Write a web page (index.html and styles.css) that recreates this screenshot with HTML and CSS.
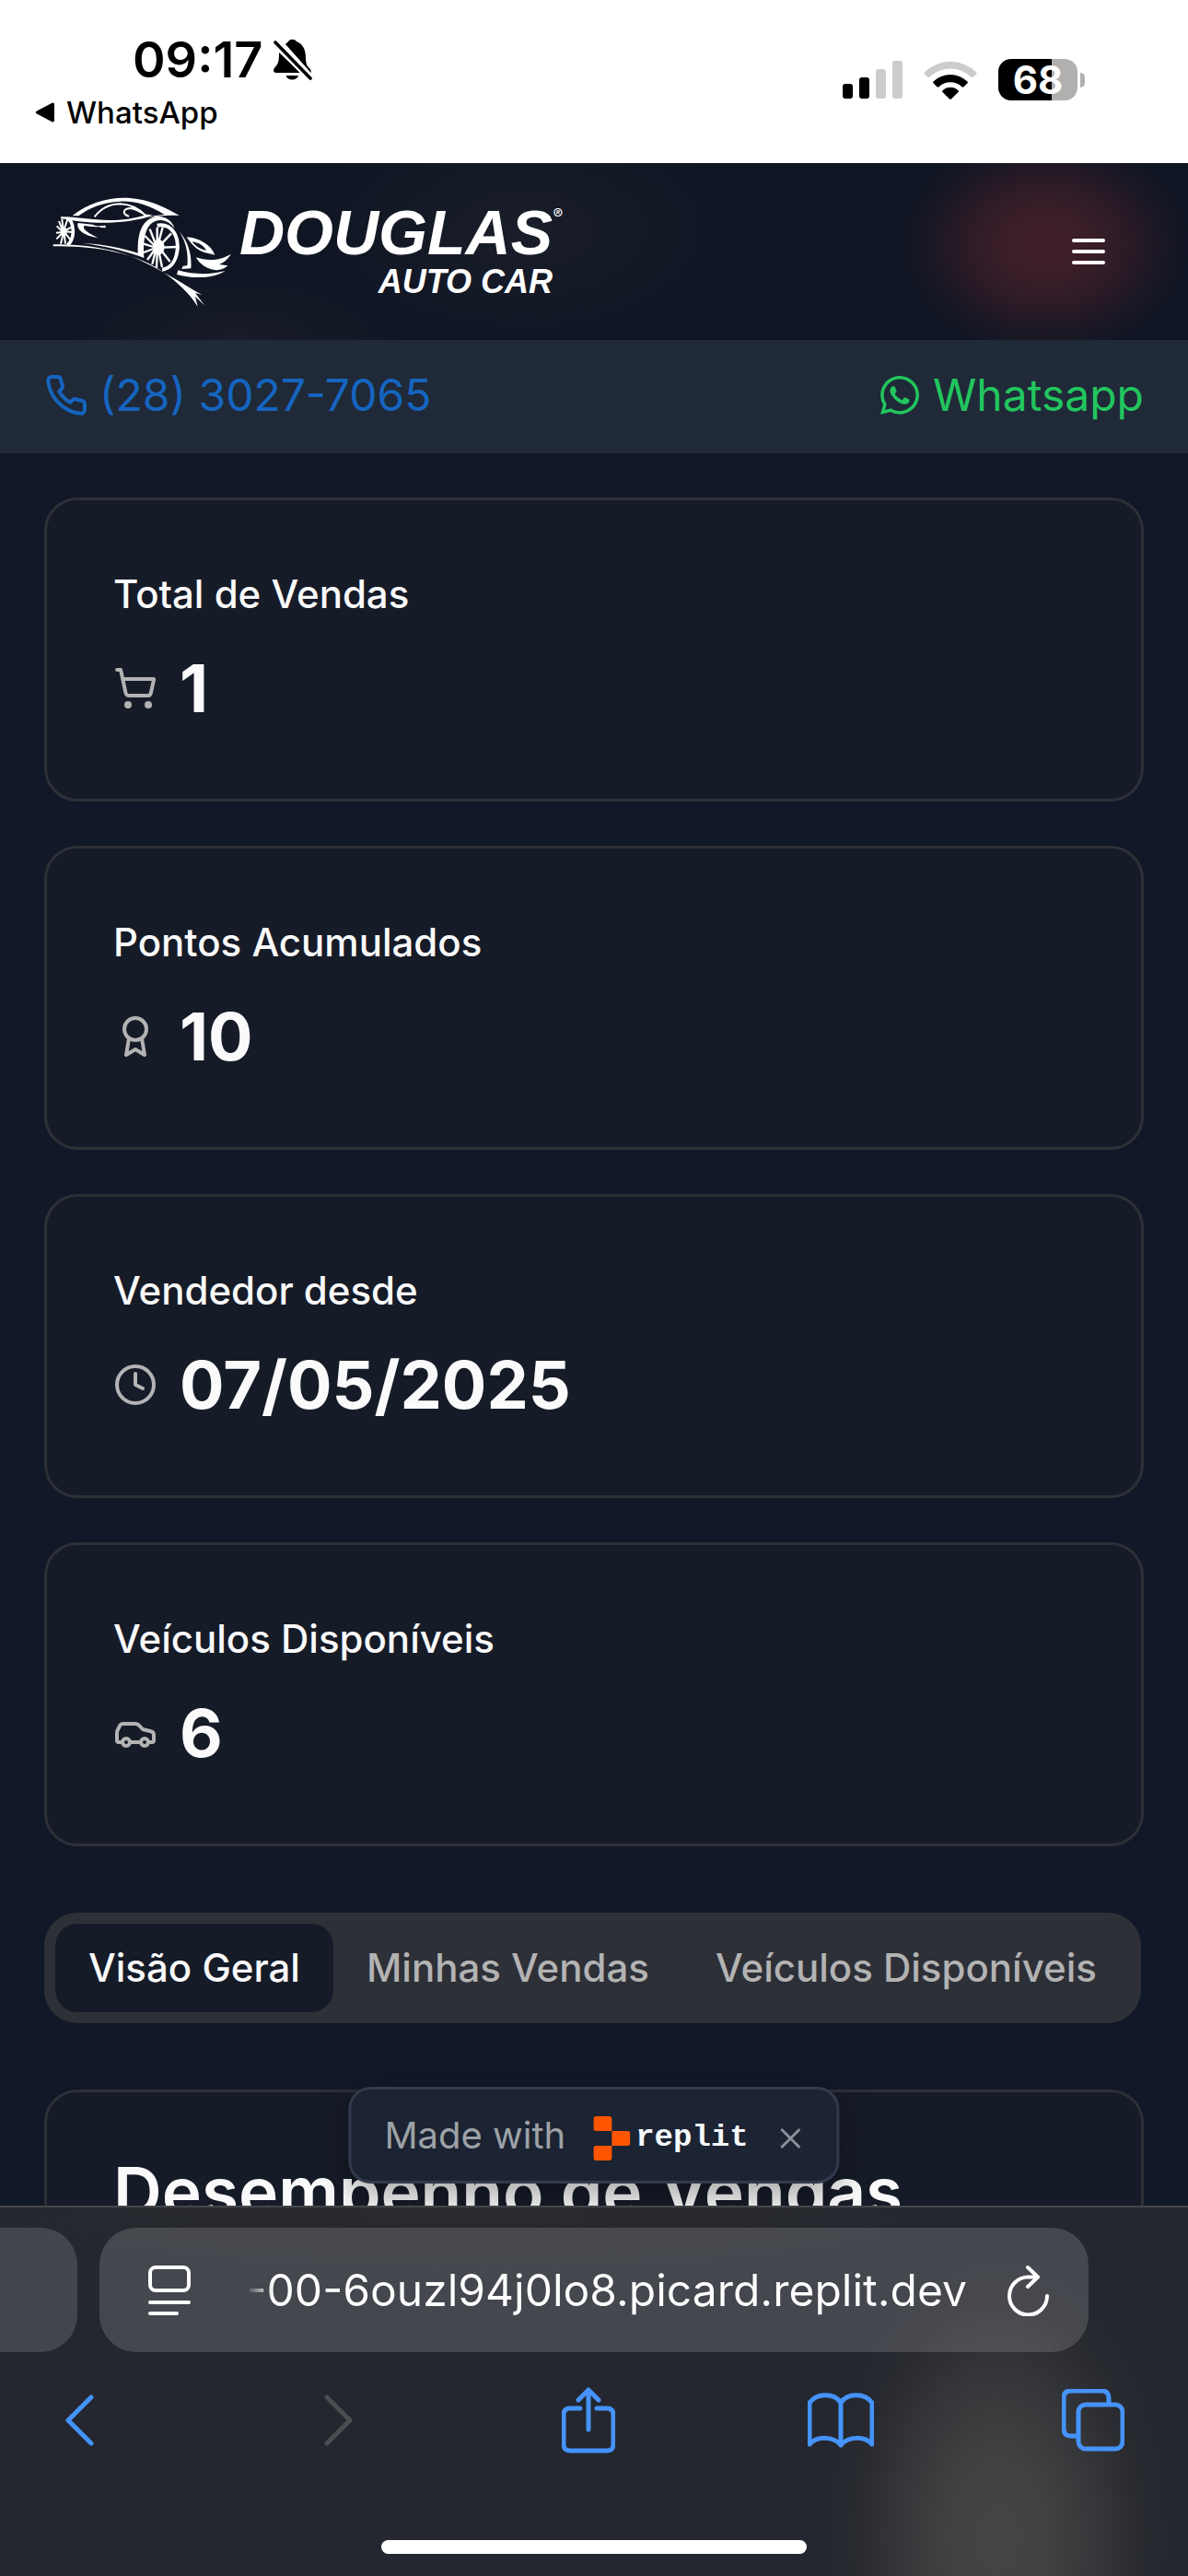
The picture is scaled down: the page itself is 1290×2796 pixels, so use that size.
FILE: index.html
```html
<!DOCTYPE html>
<html lang="pt-BR">
<head>
  <meta charset="utf-8">
  <meta name="viewport" content="width=device-width, initial-scale=1">
  <title>Douglas Auto Car</title>
  <link rel="stylesheet" href="styles.css">
</head>
<body>
  <div class="status">
    <div class="status-left">
      <div class="clock-row">
        <span class="time">09:17</span>
        <svg class="bell" viewBox="0 0 42 46" aria-hidden="true">
          <path d="M12 7C14 4.500 15.500 4 16 3a5 4 0 0 1 9 0c6 2 9.500 8 9.800 15 .3 9 1 11 4.200 14 1.500 1.500 2 3 1.600 5L13 6zM6 15l23.500 22H3c-4 0-3.500-4-1-6.500C5.500 27 6 23 6 15zM13.500 40h13.500a7 6 0 0 1-13.500 0z" fill="currentColor"/>
          <path d="M2 4L40 43" stroke="#fff" stroke-width="8"/>
          <path d="M2 4L40 43" stroke="currentColor" stroke-width="3.600" stroke-linecap="round"/>
        </svg>
      </div>
      <a class="back-app" href="#whatsapp">
        <svg class="back-arrow" viewBox="0 0 22 22" aria-hidden="true"><path d="M2 9.500L18.500.8Q21 0 21 2.500v17q0 2.500-2.500 1.700L2 12.500q-2.500-1.500 0-3z" fill="currentColor"/></svg>
        WhatsApp
      </a>
    </div>
    <div class="status-right">
      <svg class="signal" viewBox="0 0 65 42" aria-hidden="true">
        <rect x="0" y="25" width="11" height="16" rx="3"/>
        <rect x="18" y="18" width="11" height="23" rx="3"/>
        <rect x="36" y="9" width="11" height="32" rx="3" fill="#ccc"/>
        <rect x="54" y="0" width="11" height="41" rx="3" fill="#ccc"/>
      </svg>
      <svg class="wifi" viewBox="0 0 58 42" aria-hidden="true">
        <path d="M.8 12.500a40 40 0 0 1 56.400 0q.8 1 0 1.800l-3.500 3.500q-1 .8-2 0a32.500 32.500 0 0 0-45.400 0q-1 .8-2 0L.8 14.300q-.8-.8 0-1.800z" fill="#ccc"/>
        <path d="M10.500 22.500a26.500 26.500 0 0 1 37 0q.8 1 0 1.800l-4 4q-1 .7-2 0a18 18 0 0 0-25 0q-1 .7-2 0l-4-4q-.8-.8 0-1.800z"/>
        <path d="M20.500 32.200a12.500 12.500 0 0 1 17 0q.8 1 0 1.800l-7.300 7.300q-1.200 1-2.400 0L20.500 34q-.8-.8 0-1.800z"/>
      </svg>
      <div class="battery"><span class="battery-level">68</span><span class="battery-cap"></span></div>
    </div>
  </div>

  <div class="viewport">
    <header class="site-header">
      <a class="logo" href="#inicio" aria-label="Douglas Auto Car">
        <svg class="logo-car" viewBox="-12 0 636 405" aria-hidden="true">
          <g fill="#fff">
            <path d="M80 84C135 40 205 22 268 27c62 5 112 28 160 57-35-2-70 0-104 8 15-7 35-10 56-11C325 47 280 36 235 38 180 41 135 58 100 85z"/>
            <path d="M42 88c70-2 170 30 280-8 8 0 14 2 20 3C250 115 130 112 42 93z"/>
            <path d="M98 108l48 5c12 6 24 5 42 3v8l-16-1-6-3c-16 2-36-2-48-3-5 12 10 22 46 40-40-6-74-25-66-49z"/>
            <path d="M113 174c70 3 130 16 180 32-2-60 10-110 62-120 30 0 50 15 58 40-14-18-32-30-54-26-42 8-50 60-46 122-50-20-120-38-200-48z"/>
            <path d="M17 178c110 0 215 15 300 60 80 38 140 80 185 104l-22-6 30 40-30-28 8 32c-30-48-80-92-140-130C255 200 150 184 17 184z"/>
            <path d="M428 136c26 30 42 70 38 120l-30 2 4-10 14-1c4-40-4-78-26-111z"/>
            <path d="M452 154c40 2 78 24 92 58l-34-8c-26-8-44-28-58-50zm18 15c12 16 26 24 46 29-8-16-24-26-46-29z" fill-rule="evenodd"/>
            <path d="M482 220c36 12 78 12 114-11-10 18-24 28-38 34l28 4c-10 10-26 16-44 14-26-4-46-18-60-41z"/>
            <path d="M424 262c54 16 110 14 154 2-40 26-108 26-158 12z"/>
          </g>
          <g fill="none" stroke="#fff">
            <path d="M152 88c22-28 52-42 84-42 36 2 62 16 82 38M320 84c-18-14-34-20-48-24-28 0-32 20-8 26" stroke-width="6"/>
            <path d="M62 92c24 10 28 66 2 88" stroke-width="11"/>
            <path d="M356 116c48-8 70 36 66 78-4 40-24 62-50 66" stroke-width="12"/>
            <path d="M54 134l26-14M54 136l27 2M54 138l22 28M52 132l12-36M50 132l-4-38M48 134l-12-32M47 136l-18-18M47 138l-20 2M48 140l-20 20M50 142l-8 34M53 142l4 34" stroke-width="6"/>
            <path d="M368 178l34-36M372 188l48-2M368 196l30 38M360 174l14-52M356 172l0-50M350 174l-18-46M346 180l-30-30M344 186l-32-10M344 192l-32 12M346 198l-22 30M350 202l-10 40M356 204l-2 50M362 204l10 48" stroke-width="7"/>
          </g>
          <ellipse cx="53" cy="136" rx="9" ry="13" fill="#fff"/>
          <ellipse cx="361" cy="187" rx="19" ry="25" fill="#fff"/>
        </svg>
        <span class="logo-text">
          <span class="logo-name">DOUGLAS</span>
          <span class="logo-sub">AUTO CAR</span>
        </span>
        <span class="logo-mark">®</span>
      </a>
      <button class="menu-btn" type="button" aria-label="Menu">
        <svg class="icon" viewBox="0 0 24 24" aria-hidden="true"><path d="M4 6h16M4 12h16M4 18h16"/></svg>
      </button>
    </header>

    <div class="contact-bar">
      <a class="contact phone" href="tel:2830277065">
        <svg class="icon" viewBox="0 0 24 24" aria-hidden="true"><path d="M22 16.920v3a2 2 0 0 1-2.180 2 19.790 19.790 0 0 1-8.630-3.070 19.500 19.500 0 0 1-6-6 19.790 19.790 0 0 1-3.070-8.670A2 2 0 0 1 4.110 2h3a2 2 0 0 1 2 1.720 12.840 12.840 0 0 0 .7 2.810 2 2 0 0 1-.45 2.110L8.090 9.910a16 16 0 0 0 6 6l1.270-1.270a2 2 0 0 1 2.110-.45 12.840 12.840 0 0 0 2.810.7A2 2 0 0 1 22 16.920z"/></svg>
        (28) 3027-7065
      </a>
      <a class="contact whats" href="#whatsapp">
        <svg class="icon-fill" viewBox="0 0 448 512" aria-hidden="true"><path d="M380.900 97.100C339 55.100 283.200 32 223.900 32c-122.400 0-222 99.600-222 222 0 39.100 10.200 77.300 29.600 111L0 480l117.700-30.900c32.400 17.700 68.900 27 106.100 27h.1c122.300 0 224.100-99.600 224.100-222 0-59.300-25.200-115-67.100-157zm-157 341.600c-33.200 0-65.700-8.900-94-25.700l-6.700-4-69.800 18.300L72 359.200l-4.400-7c-18.500-29.400-28.200-63.300-28.200-98.200 0-101.700 82.800-184.500 184.600-184.500 49.300 0 95.600 19.200 130.400 54.100 34.800 34.900 56.200 81.200 56.100 130.500 0 101.800-84.900 184.600-186.600 184.600zm101.200-138.200c-5.500-2.800-32.800-16.200-37.900-18-5.100-1.900-8.800-2.800-12.500 2.800-3.700 5.600-14.300 18-17.600 21.800-3.200 3.700-6.500 4.200-12 1.400-32.600-16.300-54-29.100-75.500-66-5.700-9.800 5.700-9.100 16.300-30.300 1.800-3.700.9-6.900-.5-9.700-1.400-2.800-12.500-30.100-17.100-41.200-4.500-10.800-9.100-9.300-12.500-9.500-3.200-.2-6.900-.2-10.600-.2-3.700 0-9.700 1.400-14.800 6.900-5.100 5.600-19.400 19-19.400 46.300 0 27.300 19.900 53.700 22.600 57.400 2.800 3.700 39.100 59.700 94.800 83.800 35.200 15.200 49 16.500 66.600 13.900 10.700-1.600 32.800-13.400 37.400-26.400 4.600-13 4.600-24.100 3.200-26.400-1.300-2.500-5-3.900-10.500-6.600z"/></svg>
        Whatsapp
      </a>
    </div>

    <main class="content">
      <section class="stats">
        <article class="card">
          <h3 class="card-label">Total de Vendas</h3>
          <div class="card-value">
            <svg class="icon" viewBox="0 0 24 24" aria-hidden="true"><circle cx="8" cy="21" r="1"/><circle cx="19" cy="21" r="1"/><path d="M2.050 2.050h2l2.660 12.420a2 2 0 0 0 2 1.580h9.780a2 2 0 0 0 1.950-1.570l1.650-7.430H5.120"/></svg>
            <span>1</span>
          </div>
        </article>
        <article class="card">
          <h3 class="card-label">Pontos Acumulados</h3>
          <div class="card-value">
            <svg class="icon" viewBox="0 0 24 24" aria-hidden="true"><circle cx="12" cy="8" r="6"/><path d="M15.477 12.890L17 22l-5-3-5 3 1.523-9.110"/></svg>
            <span>10</span>
          </div>
        </article>
        <article class="card">
          <h3 class="card-label">Vendedor desde</h3>
          <div class="card-value">
            <svg class="icon" viewBox="0 0 24 24" aria-hidden="true"><circle cx="12" cy="12" r="10"/><path d="M12 6v6l4 2"/></svg>
            <span>07/05/2025</span>
          </div>
        </article>
        <article class="card">
          <h3 class="card-label">Veículos Disponíveis</h3>
          <div class="card-value">
            <svg class="icon" viewBox="0 0 24 24" aria-hidden="true"><path d="M19 17h2c.6 0 1-.4 1-1v-3c0-.9-.7-1.700-1.500-1.900C18.700 10.600 16 10 16 10s-1.300-1.400-2.200-2.300c-.5-.4-1.100-.7-1.800-.7H5c-.6 0-1.100.4-1.400.9l-1.400 2.900A3.700 3.700 0 0 0 2 12v4c0 .6.4 1 1 1h2"/><circle cx="7" cy="17" r="2"/><path d="M9 17h6"/><circle cx="17" cy="17" r="2"/></svg>
            <span>6</span>
          </div>
        </article>
      </section>

      <div class="tabs" role="tablist">
        <button class="tab is-active" type="button" role="tab" aria-selected="true">Visão Geral</button>
        <button class="tab" type="button" role="tab" aria-selected="false">Minhas Vendas</button>
        <button class="tab" type="button" role="tab" aria-selected="false">Veículos Disponíveis</button>
      </div>

      <section class="card panel">
        <h2 class="panel-title">Desempenho de Vendas</h2>
      </section>
    </main>

    <div class="badge">
      <span>Made with</span>
      <a class="replit" href="#replit">
        <svg class="replit-logo" viewBox="0 0 40 48" aria-hidden="true"><path d="M3 0h14a3 3 0 0 1 3 3v13H3a3 3 0 0 1-3-3V3a3 3 0 0 1 3-3zM20 16h17a3 3 0 0 1 3 3v10a3 3 0 0 1-3 3H20zM3 32h17v13a3 3 0 0 1-3 3H3a3 3 0 0 1-3-3V35a3 3 0 0 1 3-3z" fill="#ff5500"/></svg>
        <span>replit</span>
      </a>
      <button class="badge-close" type="button" aria-label="Fechar">
        <svg viewBox="0 0 24 24" aria-hidden="true"><path d="M2 2l20 20M22 2L2 22" stroke="currentColor" stroke-width="3"/></svg>
      </button>
    </div>
  </div>

  <footer class="browser">
    <div class="address-row">
      <div class="prev-tab"></div>
      <div class="address">
        <button class="bar-btn" type="button" aria-label="Menu da página">
          <svg class="page-icon" viewBox="0 0 46 56" fill="none" stroke="currentColor" stroke-width="4" stroke-linecap="round" aria-hidden="true"><rect x="2" y="3" width="42" height="25" rx="6"/><path d="M2 41h42M2 53h29"/></svg>
        </button>
        <span class="url">-00-6ouzl94j0lo8.picard.replit.dev</span>
        <button class="bar-btn" type="button" aria-label="Recarregar">
          <svg class="reload-icon" viewBox="0 0 46 56" fill="none" stroke="currentColor" stroke-width="4" stroke-linecap="round" stroke-linejoin="round" aria-hidden="true"><path d="M43 34a20.500 20.500 0 1 1-20.500-20.500H33M22 3l11 10.500L22 24"/></svg>
        </button>
      </div>
    </div>
    <nav class="toolbar">
      <button class="bar-btn tool" type="button" aria-label="Voltar">
        <svg class="chevron" viewBox="0 0 42 56" aria-hidden="true"><path d="M29 3L4 28l25 25"/></svg>
      </button>
      <button class="bar-btn tool" type="button" aria-label="Avançar" disabled>
        <svg class="chevron" viewBox="0 0 42 56" aria-hidden="true"><path d="M11 3l25 25L11 53"/></svg>
      </button>
      <button class="bar-btn tool" type="button" aria-label="Compartilhar">
        <svg class="share" viewBox="0 0 58 72" aria-hidden="true"><path d="M20 23H9q-7 0-7 7v32q0 7 7 7h40q7 0 7-7V30q0-7-7-7H38M29 46V3M18 14L29 3l11 11"/></svg>
      </button>
      <button class="bar-btn tool" type="button" aria-label="Favoritos">
        <svg class="book" viewBox="0 0 72 60" aria-hidden="true"><path d="M36 57V11C29 0 10 0 2 11v45c8-9 26-9 34 1 8-10 26-10 34-1V11C62 0 43 0 36 11"/></svg>
      </button>
      <button class="bar-btn tool" type="button" aria-label="Abas">
        <svg class="windows" viewBox="0 0 68 68" aria-hidden="true"><rect x="18" y="17" width="48" height="48" rx="8"/><path d="M17 51h-7q-8 0-8-8V10q0-8 8-8h33q8 0 8 8v6"/></svg>
      </button>
    </nav>
    <div class="home-indicator"></div>
  </footer>
</body>
</html>
```
FILE: styles.css
```css
* { box-sizing: border-box; }

body {
  margin: 0;
  height: 100vh;
  display: flex;
  flex-direction: column;
  overflow: hidden;
  background: #111827;
  color: #fafafa;
  font-family: Inter, "Liberation Sans", sans-serif;
}

button {
  border: 0;
  padding: 0;
  background: none;
  color: inherit;
  font: inherit;
}

a { color: inherit; text-decoration: none; }
svg { display: block; flex: none; }
h2, h3 { margin: 0; }

.icon {
  width: 48px;
  height: 48px;
  fill: none;
  stroke: currentColor;
  stroke-width: 2;
  stroke-linecap: round;
  stroke-linejoin: round;
}

/* Device status bar */
.status {
  flex: none;
  display: flex;
  justify-content: space-between;
  padding: 32px 112px 32px 38px;
  background: #fff;
  color: #000;
}
.status-left { display: flex; flex-direction: column; gap: 1px; }
.clock-row { display: flex; align-items: center; gap: 12px; padding-left: 106px; }
.time { font-size: 54px; font-weight: 600; line-height: 66px; }
.bell { width: 42px; height: 46px; }
.back-app { display: flex; align-items: center; gap: 12px; font-size: 33px; font-weight: 500; line-height: 46px; }
.back-arrow { width: 22px; height: 22px; }
.status-right { display: flex; align-items: center; align-self: flex-start; gap: 23px; padding-top: 32px; }
.signal { width: 65px; height: 42px; }
.wifi { width: 58px; height: 42px; }
.battery { display: flex; align-items: center; gap: 3px; }
.battery-level {
  width: 86px;
  border-radius: 14px;
  background: linear-gradient(to right, #000 68%, #b0b0b0 68%);
  color: #fff;
  font-size: 42px;
  font-weight: 700;
  line-height: 45px;
  text-align: center;
}
.battery-cap { width: 5px; height: 16px; border-radius: 0 5px 5px 0; background: #b0b0b0; }

/* Page area */
.viewport {
  position: relative;
  flex: 1;
  min-height: 0;
  overflow: hidden;
}

.site-header {
  display: flex;
  align-items: center;
  justify-content: space-between;
  height: 192px;
  padding: 0 84px 0 48px;
  background:
    radial-gradient(ellipse 160px 125px at 88% 46%, #3f1f29 0%, #3c1e29 25%, rgba(52, 29, 39, .85) 50%, rgba(42, 26, 38, .5) 75%, transparent 100%),
    radial-gradient(ellipse 240px 130px at 44% 38%, #1a1e2a, transparent),
    radial-gradient(ellipse 200px 80px at 20% 100%, #181c28, transparent),
    #0f1523;
}
.logo { display: flex; align-items: flex-start; color: #fff; }
.logo-car { width: 212px; height: 135px; }
.logo-text {
  display: flex;
  flex-direction: column;
  align-items: flex-end;
  padding-top: 10px;
  font-family: "Liberation Sans", sans-serif;
  font-style: italic;
  font-weight: 700;
}
.logo-name { font-size: 68px; line-height: 72px; }
.logo-sub { font-size: 36px; line-height: 36px; }
.logo-mark { padding-top: 18px; font-size: 16px; line-height: 16px; font-style: italic; }
.menu-btn { color: #fff; }

.contact-bar {
  display: flex;
  align-items: center;
  justify-content: space-between;
  padding: 24px 48px 27px;
  background: #1f2937;
  font-size: 48px;
  line-height: 72px;
}
.contact { display: flex; align-items: center; gap: 12px; }
.phone { color: #1565c0; }
.whats { color: #22c55e; }
.icon-fill { width: 48px; height: 48px; fill: currentColor; }

.content {
  display: flex;
  flex-direction: column;
  gap: 72px;
  padding: 48px;
}
.stats { display: grid; gap: 48px; }
.card {
  padding: 72px;
  border: 3px solid #2e3037;
  border-radius: 36px;
  background: #161b28;
}
.card-label { margin-bottom: 24px; font-size: 42px; font-weight: 500; line-height: 60px; }
.card-value {
  display: flex;
  align-items: center;
  gap: 24px;
  font-size: 72px;
  font-weight: 700;
  line-height: 96px;
}
.card-value .icon { color: #b3b3b3; }

.tabs {
  display: flex;
  align-self: flex-start;
  padding: 12px;
  border-radius: 36px;
  background: #2e3038;
  color: #b3b3b3;
}
.tab { padding: 18px 36px; border-radius: 24px; font-size: 42px; font-weight: 500; line-height: 60px; }
.tab.is-active { background: #161b28; color: #fafafa; }

.panel-title { font-size: 73px; font-weight: 600; line-height: 72px; }

/* Floating badge */
.badge {
  position: absolute;
  left: 50%;
  bottom: 24px;
  transform: translateX(-50%);
  display: flex;
  align-items: center;
  padding: 0 38px 0 36px;
  border: 3px solid #323a4b;
  border-radius: 24px;
  background: #1c2333;
  box-shadow: 0 12px 36px rgba(0, 0, 0, .35);
  color: #9da2a6;
  font-size: 40px;
  line-height: 99px;
  white-space: nowrap;
}
.replit {
  display: flex;
  align-items: center;
  gap: 6px;
  margin: 0 34px 0 30px;
  color: #f5f9fc;
  font-family: "Liberation Mono", monospace;
  font-size: 34px;
  font-weight: 700;
  line-height: 93px;
}
.replit, .badge-close { padding-top: 6px; }
.replit-logo { width: 40px; height: 48px; }
.badge-close { color: #8b8f97; }
.badge-close svg { width: 24px; height: 24px; }

/* Browser chrome */
.browser {
  flex: none;
  display: flex;
  flex-direction: column;
  border-top: 2px solid #45464a;
  background:
    radial-gradient(ellipse 190px 310px at 84% 90%, #454545 0%, rgba(68, 68, 68, .9) 30%, rgba(62, 62, 62, .6) 60%, rgba(50, 50, 50, .3) 82%, transparent 100%),
    radial-gradient(ellipse 600px 80px at 40% 0%, #2a2b2e, transparent),
    #24272f;
}
.address-row { display: flex; gap: 24px; padding: 22px 108px 0 0; }
.prev-tab { width: 84px; border-radius: 0 40px 40px 0; background: rgba(255, 255, 255, .14); }
.address {
  flex: 1;
  display: flex;
  align-items: center;
  height: 135px;
  padding: 0 42px 0 53px;
  border-radius: 40px;
  background: rgba(255, 255, 255, .15);
  color: #fff;
}
.page-icon, .reload-icon { width: 46px; height: 56px; }
.url {
  margin: 0 44px 0 auto;
  font-size: 48px;
  line-height: 60px;
  background: linear-gradient(to right, transparent, #fff 30px);
  background-clip: text;
  color: transparent;
}
.toolbar {
  display: flex;
  justify-content: space-between;
  align-items: center;
  height: 72px;
  margin-top: 38px;
  padding: 0 67px 0 55px;
  color: #4593fb;
}
.tool { display: flex; justify-content: center; width: 72px; }
.tool svg { fill: none; stroke: currentColor; stroke-width: 5; stroke-linecap: round; stroke-linejoin: round; }
.tool:disabled { color: #4c4d50; }
.chevron { width: 42px; height: 56px; }
.share { width: 58px; height: 72px; }
.book { width: 72px; height: 60px; }
.windows { width: 68px; height: 68px; }
.home-indicator {
  align-self: center;
  width: 462px;
  height: 15px;
  margin: 94px 0 24px;
  border-radius: 8px;
  background: #fff;
}
```
